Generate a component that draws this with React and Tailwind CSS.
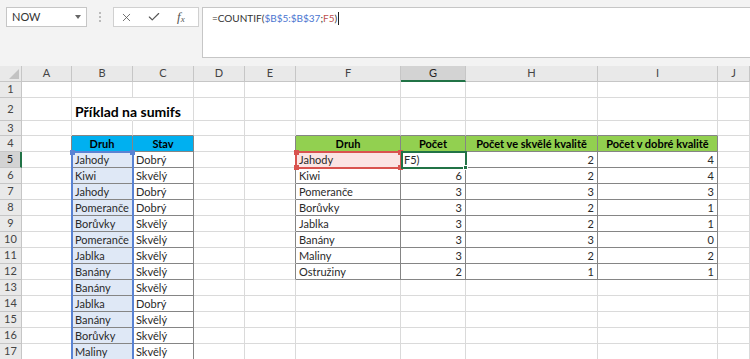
import React from "react";
import { X, Check } from "lucide-react";

const COLS = ["A", "B", "C", "D", "E", "F", "G", "H", "I", "J"];

const BC = [
  ["Jahody", "Dobrý"],
  ["Kiwi", "Skvělý"],
  ["Jahody", "Dobrý"],
  ["Pomeranče", "Dobrý"],
  ["Borůvky", "Skvělý"],
  ["Pomeranče", "Skvělý"],
  ["Jablka", "Skvělý"],
  ["Banány", "Skvělý"],
  ["Banány", "Skvělý"],
  ["Jablka", "Dobrý"],
  ["Banány", "Skvělý"],
  ["Borůvky", "Skvělý"],
  ["Maliny", "Skvělý"],
];

const FI = [
  ["Jahody", "F5)", "2", "4"],
  ["Kiwi", "6", "2", "4"],
  ["Pomeranče", "3", "3", "3"],
  ["Borůvky", "3", "2", "1"],
  ["Jablka", "3", "2", "1"],
  ["Banány", "3", "3", "0"],
  ["Maliny", "3", "2", "2"],
  ["Ostružiny", "2", "1", "1"],
];

const LIGHT = "border-[#dadada]";
const DARK = "border-[#858585]";

function cellInfo(r, c) {
  let cls = "bg-white border-r border-b " + LIGHT;
  let content = null;
  let align = "justify-start pl-[3px]";

  if (r === 2 && c === 1) {
    return {
      cls: "bg-white border-b border-[#dadada] border-r border-r-white text-[14px] font-bold text-black pl-[3px] items-end pb-[1px]",
      content: <span className="relative z-[1]">Příklad na sumifs</span>,
      align: "justify-start",
    };
  }
  if (r === 3 && (c === 1 || c === 2 || (c >= 5 && c <= 8))) {
    return { cls: "bg-white border-r border-b border-r-[#dadada] border-b-[#858585]", content: null, align: "" };
  }
  if (r === 4 && (c === 1 || c === 2)) {
    return {
      cls: "bg-[#00b0f0] border-r border-b " + DARK + " font-bold text-black",
      content: c === 1 ? "Druh" : "Stav",
      align: "justify-center",
    };
  }
  if (r === 4 && c === 0) {
    return { cls: "bg-white border-r border-b border-r-[#858585] border-b-[#dadada]", content: null, align: "" };
  }
  if (r >= 5 && c === 1) {
    const d = BC[r - 5];
    return {
      cls: "bg-[#dfe8f6] border-r border-b " + DARK + " text-[#2a2a2a]",
      content: d ? d[0] : null,
      align: "justify-start pl-[3px]",
    };
  }
  if (r >= 5 && c === 2) {
    const d = BC[r - 5];
    return {
      cls: "bg-white border-r border-b " + DARK + " text-[#2a2a2a]",
      content: d ? d[1] : null,
      align: "justify-start pl-[3px]",
    };
  }
  if (r >= 4 && r <= 12 && c === 4) {
    return { cls: "bg-white border-r border-b border-r-[#858585] border-b-[#dadada]", content: null, align: "" };
  }
  if (r === 4 && c >= 5 && c <= 8) {
    const t = ["Druh", "Počet", "Počet ve skvělé kvalitě", "Počet v dobré kvalitě"][c - 5];
    return {
      cls: "bg-[#92d050] border-r border-b " + DARK + " font-bold text-black",
      content: t,
      align: "justify-center",
    };
  }
  if (r >= 5 && r <= 12 && c >= 5 && c <= 8) {
    const d = FI[r - 5];
    const v = d[c - 5];
    let a = "justify-end pr-[3px]";
    if (c === 5 || (r === 5 && c === 6)) a = "justify-start pl-[3px]";
    return {
      cls:
        (r === 5 && c === 5 ? "bg-[#fbe4e4] " : "bg-white ") +
        "border-r border-b " +
        DARK +
        " text-[#2a2a2a]",
      content: v,
      align: a,
    };
  }
  return { cls, content, align };
}

function FxIcon() {
  return (
    <span className="text-[13px] italic text-[#555] leading-none" style={{ fontFamily: '"Liberation Serif", serif' }}>
      f<span className="text-[9px] align-[-1px]">x</span>
    </span>
  );
}

export default function App() {
  const rows = [];
  for (let r = 1; r <= 17; r++) rows.push(r);

  return (
    <div
      className="w-[750px] h-[359px] overflow-hidden bg-[#f3f3f3] text-[11px]"
      style={{ fontFamily: 'Lato, "Liberation Sans", sans-serif' }}
    >
      {/* Top formula bar area */}
      <div className="h-[66px] flex items-start pt-[7px] pl-[6px]">
        <div className="w-[81px] h-[20px] bg-white border border-[#c6c6c6] flex items-center justify-between pl-[5px] pr-[5px]">
          <span className="text-[11px] text-[#333]">NOW</span>
          <span className="w-0 h-0 border-l-[3px] border-r-[3px] border-t-[4px] border-l-transparent border-r-transparent border-t-[#666]"></span>
        </div>
        <div className="w-[26px] h-[20px] flex flex-col items-center justify-center gap-[2px]">
          <span className="w-[2px] h-[2px] bg-[#bbb]"></span>
          <span className="w-[2px] h-[2px] bg-[#bbb]"></span>
          <span className="w-[2px] h-[2px] bg-[#bbb]"></span>
        </div>
        <div className="w-[86px] h-[20px] bg-white border border-[#d0d0d0] flex items-center pl-[6px]">
          <X size={13} strokeWidth={1.5} color="#555" />
          <span className="ml-[14px] flex">
            <Check size={14} strokeWidth={2} color="#555" />
          </span>
          <span className="ml-[16px] flex">
            <FxIcon />
          </span>
        </div>
        <div className="flex-1 ml-[3px] h-[51px] bg-white border border-r-0 border-[#c6c6c6] pl-[9px] pt-[2px]">
          <div className="flex items-center h-[16px] text-[10px]">
            <span className="text-[#333]">=COUNTIF(</span>
            <span className="text-[#4a74d0]">$B$5:$B$37</span>
            <span className="text-[#333]">;</span>
            <span className="text-[#c0504d]">F5</span>
            <span className="text-[#333]">)</span>
            <span className="inline-block w-px h-[13px] bg-[#222] ml-[1px]"></span>
          </div>
        </div>
      </div>

      {/* Sheet */}
      <div className="relative h-[293px] overflow-hidden">
        <div className="grid grid-cols-[22px_50px_61px_61px_51px_51px_105px_65px_132px_120px_1fr] grid-rows-[16px_16px_23px_15px_16px_repeat(13,16px)]">
          {/* column header row */}
          <div className="bg-[#e9e9e9] border-r border-b border-[#c6c6c6] relative">
            <svg className="absolute right-[2px] bottom-[2px]" width="10" height="10" viewBox="0 0 10 10">
              <polygon points="10,0 10,10 0,10" fill="#c3c3c3" />
            </svg>
          </div>
          {COLS.map((c) =>
            c === "G" ? (
              <div
                key={c}
                className="bg-[#d3d3d3] border-r border-[#c6c6c6] border-b-2 border-b-[#217346] flex items-center justify-center text-[#222] text-[11px]"
              >
                {c}
              </div>
            ) : (
              <div
                key={c}
                className="bg-[#e9e9e9] border-r border-b border-[#c6c6c6] flex items-center justify-center text-[#444] text-[11px]"
              >
                {c}
              </div>
            )
          )}

          {rows.map((r) => (
            <React.Fragment key={r}>
              {r === 5 ? (
                <div className="bg-[#d3d3d3] border-r-2 border-r-[#217346] border-b border-b-[#c6c6c6] flex items-center justify-center text-[#222] text-[11px]">
                  {r}
                </div>
              ) : (
                <div className="bg-[#e9e9e9] border-r border-b border-[#c6c6c6] flex items-center justify-center text-[#444] text-[11px]">
                  {r}
                </div>
              )}
              {COLS.map((_, c) => {
                const info = cellInfo(r, c);
                return (
                  <div
                    key={c}
                    className={"flex items-center whitespace-nowrap leading-none text-[11px] " + info.cls + " " + info.align}
                  >
                    {info.content}
                  </div>
                );
              })}
            </React.Fragment>
          ))}
        </div>

        {/* Blue range highlight B5:B37 */}
        <div className="absolute left-[71px] top-[85px] w-[63px] h-[300px] border-2 border-[#5a83d3] pointer-events-none">
          <span className="absolute -left-[3px] -top-[3px] w-[5px] h-[5px] bg-[#5a83d3]"></span>
          <span className="absolute -right-[3px] -top-[3px] w-[5px] h-[5px] bg-[#5a83d3]"></span>
        </div>

        {/* Red range highlight F5 */}
        <div className="absolute left-[295px] top-[85px] w-[107px] h-[18px] border-2 border-[#d9534f] pointer-events-none">
          <span className="absolute -left-[3px] -top-[3px] w-[5px] h-[5px] bg-[#d9534f]"></span>
          <span className="absolute -right-[3px] -top-[3px] w-[5px] h-[5px] bg-[#d9534f]"></span>
          <span className="absolute -left-[3px] -bottom-[3px] w-[5px] h-[5px] bg-[#d9534f]"></span>
          <span className="absolute -right-[3px] -bottom-[3px] w-[5px] h-[5px] bg-[#d9534f]"></span>
        </div>

        {/* Active cell G5 */}
        <div className="absolute left-[401px] top-[85px] w-[66px] h-[18px] border-2 border-[#217346] pointer-events-none">
          <span className="absolute -right-[3px] -bottom-[3px] w-[5px] h-[5px] bg-[#217346] border border-white"></span>
        </div>
      </div>
    </div>
  );
}
